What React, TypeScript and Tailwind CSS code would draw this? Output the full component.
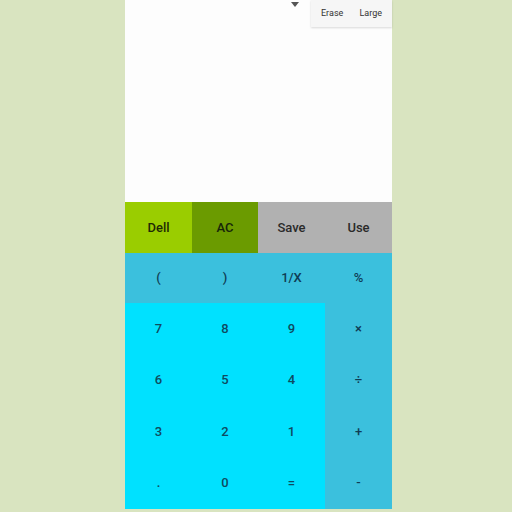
import React from "react";

const font = { fontFamily: "Roboto, 'Noto Sans', sans-serif" };

function Key({ label, className }: { label: string; className: string }) {
  return (
    <div className={`flex items-center justify-center text-[13px] font-medium ${className}`}>
      {label}
    </div>
  );
}

export default function App() {
  const nums = [
    ["7", "8", "9", "×"],
    ["6", "5", "4", "÷"],
    ["3", "2", "1", "+"],
    [".", "0", "=", "-"],
  ];

  return (
    <div className="flex h-[512px] w-full bg-[#d9e4c0] pl-[125px]" style={font}>
      <div className="flex h-[509px] w-[267px] flex-col">
        {/* display */}
        <div className="relative h-[202px] bg-[#fdfdfd]">
          <svg className="absolute left-[166px] top-[2px]" width="8" height="5" viewBox="0 0 8 5">
            <path d="M0 0 L8 0 L4 5 Z" fill="#555" />
          </svg>
          <div className="absolute right-0 top-0 flex h-[27px] w-[81px] items-center justify-between bg-[#f6f6f6] px-[10px] text-[9px] text-[#333] shadow-[0_1px_2px_rgba(0,0,0,0.15)]">
            <span>Erase</span>
            <span>Large</span>
          </div>
        </div>

        {/* keypad */}
        <div className="grid flex-1 grid-cols-[67px_66px_67px_67px] grid-rows-[51px_50px_51px_52px_51px_52px]">
          <Key label="Dell" className="bg-[#9acd00] text-[#1f2a05]" />
          <Key label="AC" className="bg-[#6b9b00] text-[#17260a]" />
          <Key label="Save" className="bg-[#b1b1b1] text-[#2a2a2a]" />
          <Key label="Use" className="bg-[#b1b1b1] text-[#2a2a2a]" />

          <Key label="(" className="bg-[#3bc0dd] text-[#0f3d55]" />
          <Key label=")" className="bg-[#3bc0dd] text-[#0f3d55]" />
          <Key label="1/X" className="bg-[#3bc0dd] text-[#0f3d55]" />
          <Key label="%" className="bg-[#3bc0dd] text-[#0f3d55]" />

          {nums.flatMap((row, r) =>
            row.map((k, c) => (
              <Key
                key={`${r}-${c}`}
                label={k}
                className={
                  c === 3
                    ? "bg-[#3bc0dd] text-[#0f3d55]"
                    : "bg-[#00e1ff] text-[#0f4a60]"
                }
              />
            ))
          )}
        </div>
      </div>
    </div>
  );
}
